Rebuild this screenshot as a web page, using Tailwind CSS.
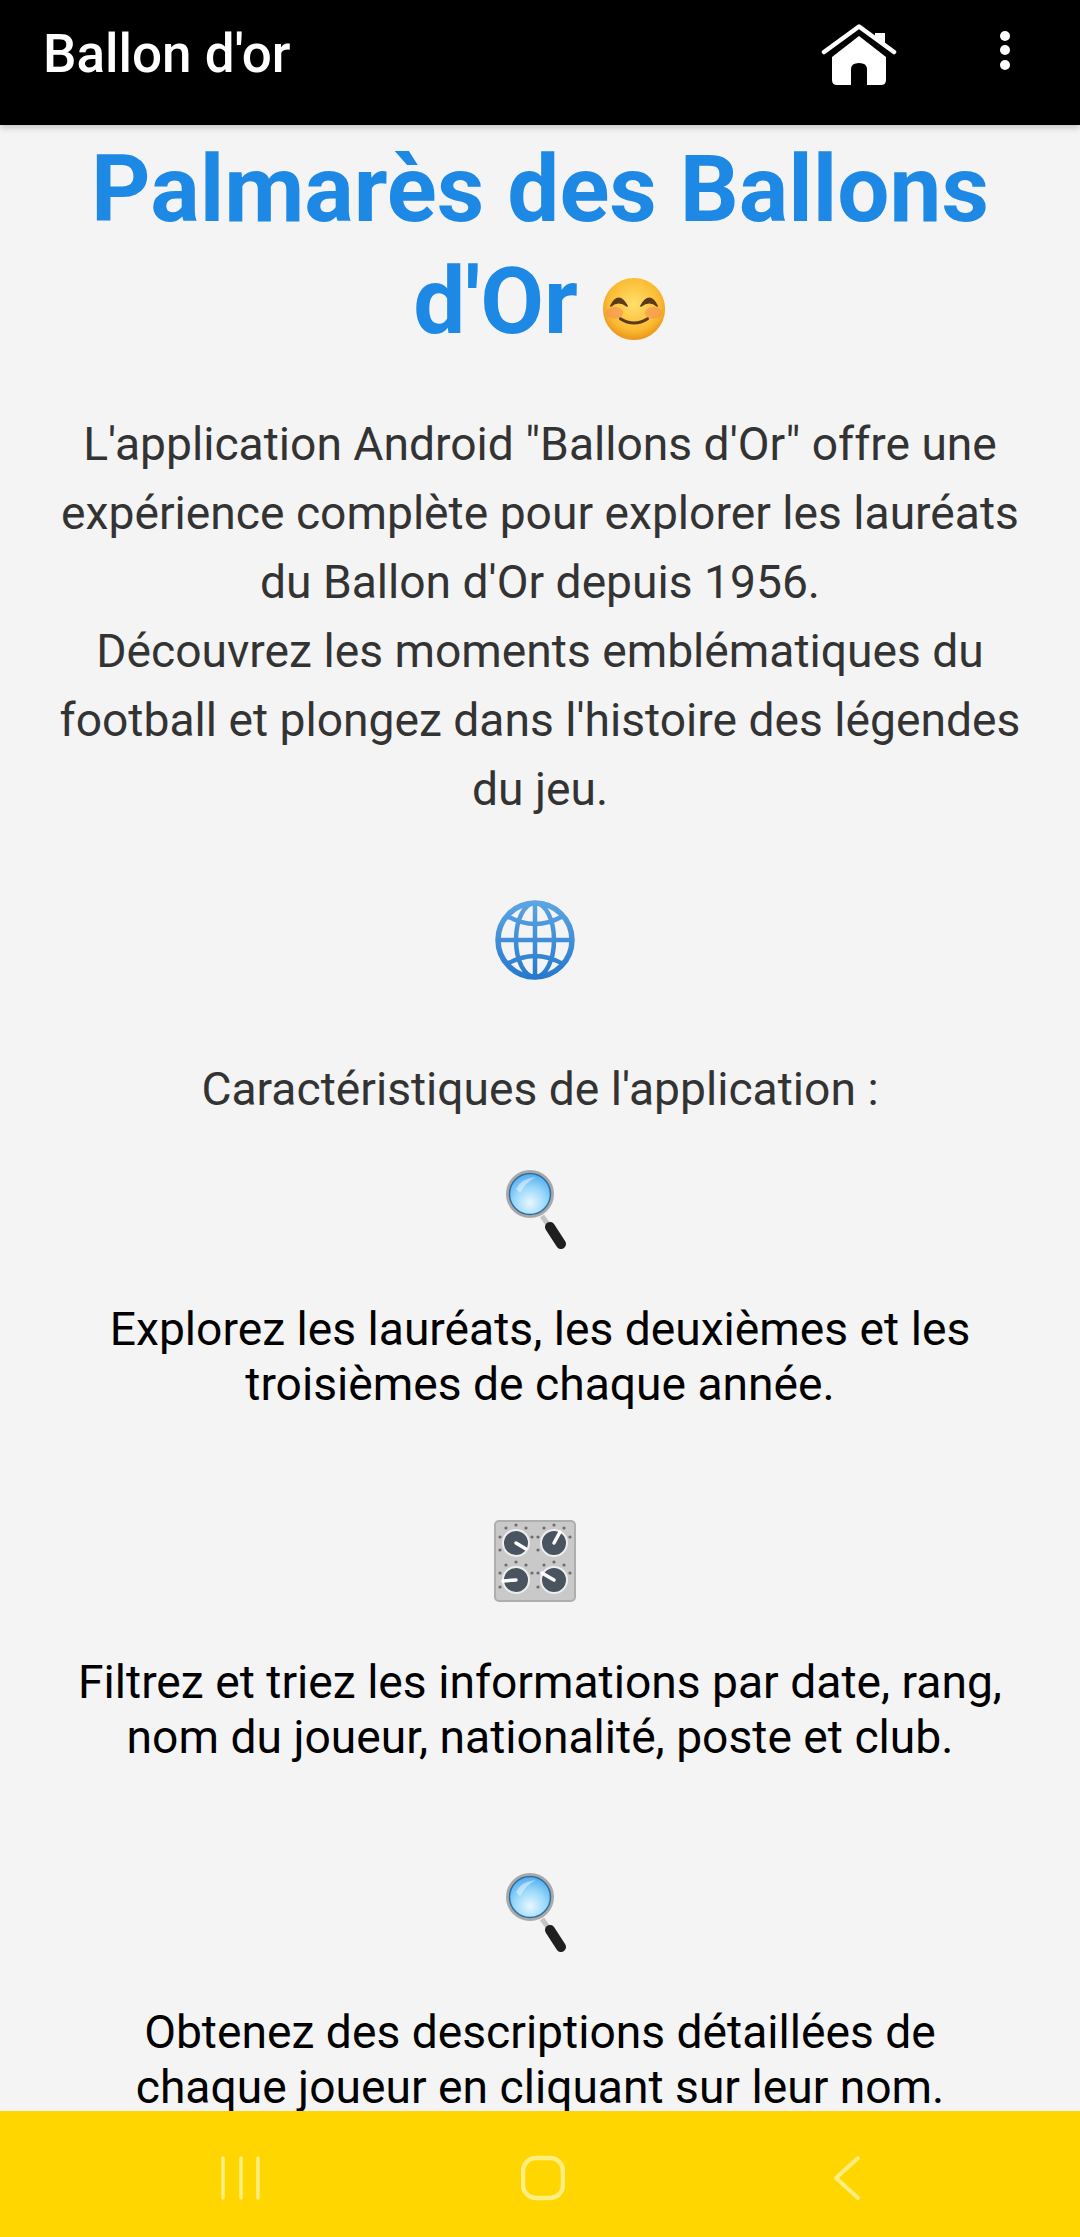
<!DOCTYPE html>
<html lang="fr">
<head>
  <meta charset="UTF-8" />
  <meta name="viewport" content="width=device-width, initial-scale=1.0"/>
  <title>Ballon d'or</title>
  <script src="https://cdn.jsdelivr.net/npm/@tailwindcss/browser@4"></script>
</head>
<body class="bg-[#f4f4f4] font-['Roboto',sans-serif]">
  <!-- shared drawings -->
  <svg class="absolute w-0 h-0" xmlns="http://www.w3.org/2000/svg">
    <defs>
      <radialGradient id="lens" cx="50%" cy="70%" r="70%">
        <stop offset="0" stop-color="#e8f7ff"/>
        <stop offset="0.5" stop-color="#9ad8fb"/>
        <stop offset="1" stop-color="#45a4ee"/>
      </radialGradient>
      <linearGradient id="globeStroke" gradientUnits="userSpaceOnUse" x1="0" y1="0" x2="0" y2="80">
        <stop offset="0" stop-color="#5ea6e4"/>
        <stop offset="1" stop-color="#2478cc"/>
      </linearGradient>
      <radialGradient id="face" cx="50%" cy="42%" r="60%">
        <stop offset="0" stop-color="#ffdf6b"/>
        <stop offset="0.7" stop-color="#fbbb33"/>
        <stop offset="1" stop-color="#e98f18"/>
      </radialGradient>
      <symbol id="magnifier" viewBox="0 0 60 80">
        <path d="M36 47 L44 58" stroke="#c4c4c4" stroke-width="5"/>
        <path d="M44 58 L55 75" stroke="#1f1f1f" stroke-width="10" stroke-linecap="round"/>
        <circle cx="24" cy="25" r="22.5" fill="url(#lens)" stroke="#a9a9a9" stroke-width="3"/>
        <circle cx="24" cy="25" r="20.5" fill="none" stroke="#2f6f9f" stroke-width="1.5"/>
        <path d="M10 20 Q16 9 30 8 Q20 13 14 24 Z" fill="#fff" opacity="0.45"/>
      </symbol>
    </defs>
  </svg>

  <div class="h-[2237px] flex flex-col overflow-hidden">
    <!-- toolbar -->
    <header class="relative z-10 h-[125px] shrink-0 bg-black shadow-[0_3px_6px_rgba(0,0,0,0.18)] flex items-start justify-between pl-[43px] pr-[69px]">
      <h1 class="mt-[23px] text-[53px] leading-[62px] font-medium text-white">Ballon d'or</h1>
      <div class="flex items-start gap-[102px] pt-[24px]">
        <svg class="w-[76px] h-[62px]" viewBox="0 0 76 62" fill="#fff">
          <path d="M3 28 L38 2.5 L73 28" fill="none" stroke="#fff" stroke-width="4.5" stroke-linecap="round" stroke-linejoin="round"/>
          <path d="M54 9 H64 V21 L54 14 Z"/>
          <path d="M38 12 L65 33 V56 Q65 61 60 61 H46 V45 Q46 39 38 39 Q30 39 30 45 V61 H16 Q11 61 11 56 V33 Z"/>
        </svg>
        <svg class="w-[12px] h-[52px] mt-[6px]" viewBox="0 0 12 52" fill="#fff">
          <circle cx="6" cy="6" r="5"/>
          <circle cx="6" cy="20" r="5"/>
          <circle cx="6" cy="35" r="5"/>
        </svg>
      </div>
    </header>

    <main class="flex-1 overflow-hidden text-center">
      <h2 class="mx-auto w-[960px] pt-[9px] text-[92.5px] leading-[112px] font-bold text-[#1e88e5]">Palmarès des Ballons d'Or <svg class="inline-block w-[66px] h-[66px] align-[-9px]" viewBox="0 0 68 68">
          <circle cx="34" cy="34" r="32" fill="url(#face)"/>
          <ellipse cx="14" cy="38" rx="9" ry="6" fill="#f58a5c" opacity="0.55"/>
          <ellipse cx="54" cy="38" rx="9" ry="6" fill="#f58a5c" opacity="0.55"/>
          <path d="M10 31 Q18 15 27 31 Q18 24 10 31 Z" fill="#5b3a1c" stroke="#5b3a1c" stroke-width="1.5" stroke-linejoin="round"/>
          <path d="M41 31 Q50 15 58 31 Q50 24 41 31 Z" fill="#5b3a1c" stroke="#5b3a1c" stroke-width="1.5" stroke-linejoin="round"/>
          <path d="M20 44 Q34 53 48 44" fill="none" stroke="#5b3a1c" stroke-width="3" stroke-linecap="round"/>
        </svg></h2>

      <p class="mt-[52px] text-[46.2px] leading-[69px] text-[#333333]">
        L'application Android "Ballons d'Or" offre une<br>
        expérience complète pour explorer les lauréats<br>
        du Ballon d'Or depuis 1956.<br>
        Découvrez les moments emblématiques du<br>
        football et plongez dans l'histoire des légendes<br>
        du jeu.
      </p>

      <svg class="block mx-auto mt-[76px] w-[80px] h-[80px] -translate-x-[5px]" viewBox="0 0 80 80" fill="none" stroke="url(#globeStroke)" stroke-width="4.5">
        <circle cx="40" cy="40" r="37" stroke-width="5.5"/>
        <ellipse cx="40" cy="40" rx="19" ry="37"/>
        <path d="M40 3 V77" />
        <path d="M3 40 H77"/>
        <path d="M12 16 Q40 32 68 16"/>
        <path d="M12 64 Q40 48 68 64"/>
      </svg>

      <p class="mt-[75px] text-[46.2px] leading-[69px] text-[#333333]">Caractéristiques de l'application :</p>

      <svg class="block mx-auto mt-[45px] w-[60px] h-[80px] -translate-x-[4px]"><use href="#magnifier"/></svg>
      <p class="mt-[53px] text-[46.2px] leading-[55px] text-black">Explorez les lauréats, les deuxièmes et les<br>troisièmes de chaque année.</p>

      <svg class="block mx-auto mt-[108px] w-[82px] h-[82px] -translate-x-[5px]" viewBox="0 0 82 82">
        <rect x="1" y="1" width="80" height="80" rx="4" fill="#c9c9c9" stroke="#aeaeae" stroke-width="2"/>
        <g fill="#4a5460" stroke="#eeeeee" stroke-width="2">
          <circle cx="22" cy="23" r="13"/>
          <circle cx="60" cy="23" r="13"/>
          <circle cx="22" cy="60" r="13"/>
          <circle cx="60" cy="60" r="13"/>
        </g>
        <g stroke="#ffffff" stroke-width="3.5" stroke-linecap="round">
          <path d="M22 23 L32 29"/>
          <path d="M60 23 L66 12"/>
          <path d="M22 60 L9 61"/>
          <path d="M60 60 L48 53"/>
        </g>
        <g fill="#6c6c6c">
          <circle cx="6" cy="17" r="1.6"/><circle cx="6" cy="30" r="1.6"/><circle cx="12" cy="8" r="1.6"/><circle cx="22" cy="5" r="1.6"/><circle cx="32" cy="8" r="1.6"/><circle cx="38" cy="17" r="1.6"/>
          <circle cx="44" cy="17" r="1.6"/><circle cx="44" cy="30" r="1.6"/><circle cx="50" cy="8" r="1.6"/><circle cx="60" cy="5" r="1.6"/><circle cx="70" cy="8" r="1.6"/><circle cx="76" cy="17" r="1.6"/>
          <circle cx="6" cy="53" r="1.6"/><circle cx="6" cy="67" r="1.6"/><circle cx="12" cy="45" r="1.6"/><circle cx="22" cy="42" r="1.6"/><circle cx="32" cy="45" r="1.6"/><circle cx="38" cy="53" r="1.6"/>
          <circle cx="44" cy="53" r="1.6"/><circle cx="44" cy="67" r="1.6"/><circle cx="50" cy="45" r="1.6"/><circle cx="60" cy="42" r="1.6"/><circle cx="70" cy="45" r="1.6"/><circle cx="76" cy="53" r="1.6"/>
        </g>
      </svg>
      <p class="mt-[53px] text-[46.2px] leading-[55px] text-black">Filtrez et triez les informations par date, rang,<br>nom du joueur, nationalité, poste et club.</p>

      <svg class="block mx-auto mt-[107px] w-[60px] h-[80px] -translate-x-[4px]"><use href="#magnifier"/></svg>
      <p class="mt-[53px] text-[46.2px] leading-[55px] text-black">Obtenez des descriptions détaillées de<br>chaque joueur en cliquant sur leur nom.</p>
    </main>

    <!-- android nav bar -->
    <nav class="h-[126px] shrink-0 bg-[#ffd600] flex items-center justify-between pl-[221px] pr-[219px] pt-[8px]">
      <svg class="w-[40px] h-[44px]" viewBox="0 0 40 44" fill="none" stroke="#ffee80" stroke-width="3.5" stroke-linecap="round">
        <path d="M2 2 V42"/><path d="M20 2 V42"/><path d="M37 2 V42"/>
      </svg>
      <svg class="w-[44px] h-[46px] -translate-x-[4px]" viewBox="0 0 44 46" fill="none" stroke="#ffee80" stroke-width="4.5">
        <rect x="2" y="3" width="40" height="40" rx="13"/>
      </svg>
      <svg class="w-[28px] h-[46px]" viewBox="0 0 28 46" fill="none" stroke="#ffee80" stroke-width="4" stroke-linecap="round" stroke-linejoin="round">
        <path d="M25 3 L3 23 L25 43"/>
      </svg>
    </nav>
  </div>
</body>
</html>
